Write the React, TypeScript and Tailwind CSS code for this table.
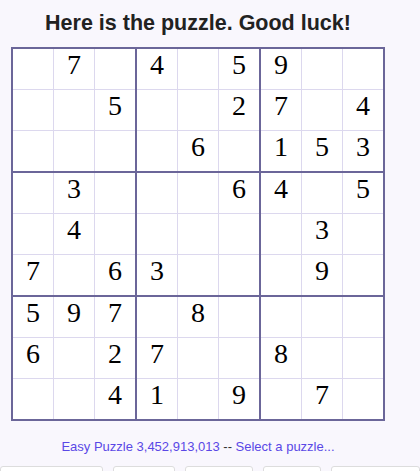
import React from 'react';

const puzzle = [
  '.7.4.59..',
  '..5..27.4',
  '....6.153',
  '.3...64.5',
  '.4.....3.',
  '7.63...9.',
  '597.8....',
  '6.27..8..',
  '..41.9.7.',
];

// digit at row r, col c
const cellAt = (r: number, c: number) => {
  const ch = puzzle[r][c];
  return ch === '.' ? '' : ch;
};

function Box({ br, bc }: { br: number; bc: number }) {
  const cells = [];
  for (let i = 0; i < 3; i++) {
    for (let j = 0; j < 3; j++) {
      const v = cellAt(br * 3 + i, bc * 3 + j);
      cells.push(
        <div
          key={`${i}-${j}`}
          className="w-[40px] h-[40px] bg-white flex justify-center items-start text-[28px] leading-[32px] text-black font-['Liberation_Serif','Times_New_Roman',serif]"
        >
          {v}
        </div>
      );
    }
  }
  return <div className="grid grid-cols-3 gap-px bg-[#dcd8ee]">{cells}</div>;
}

export default function App() {
  const boxes = [];
  for (let br = 0; br < 3; br++) {
    for (let bc = 0; bc < 3; bc++) {
      boxes.push(<Box key={`${br}-${bc}`} br={br} bc={bc} />);
    }
  }

  return (
    <div className="w-[420px] h-[471px] overflow-hidden bg-[#f9f7fd] font-['Liberation_Sans',Arial,sans-serif]">
      <div className="w-[396px] flex flex-col items-center pt-[11px]">
        <h1 className="text-[21.5px] leading-[24px] font-bold text-[#222222]">
          Here is the puzzle. Good luck!
        </h1>

        {/* Grille */}
        <div className="mt-[12px] p-[2px] bg-[#6b6699]">
          <div className="grid grid-cols-3 gap-[2px] bg-[#6b6699]">{boxes}</div>
        </div>

        <p className="mt-[18px] text-[13px] leading-[15px] text-[#333333]">
          <span className="text-[#5a48e6]">Easy Puzzle 3,452,913,013</span>
          {' -- '}
          <span className="text-[#5a48e6]">Select a puzzle...</span>
        </p>
      </div>

      {/* Boutons (coupés) */}
      <div className="mt-[12px] flex gap-[10px]">
        <div className="w-[104px] h-[10px] bg-white border border-[#dddddd] rounded-t-[3px]" />
        <div className="w-[63px] h-[10px] bg-white border border-[#dddddd] rounded-t-[3px]" />
        <div className="w-[69px] h-[10px] bg-white border border-[#dddddd] rounded-t-[3px]" />
        <div className="w-[59px] h-[10px] bg-white border border-[#dddddd] rounded-t-[3px]" />
        <div className="w-[90px] h-[10px] bg-white border border-[#dddddd] rounded-t-[3px]" />
      </div>
    </div>
  );
}
